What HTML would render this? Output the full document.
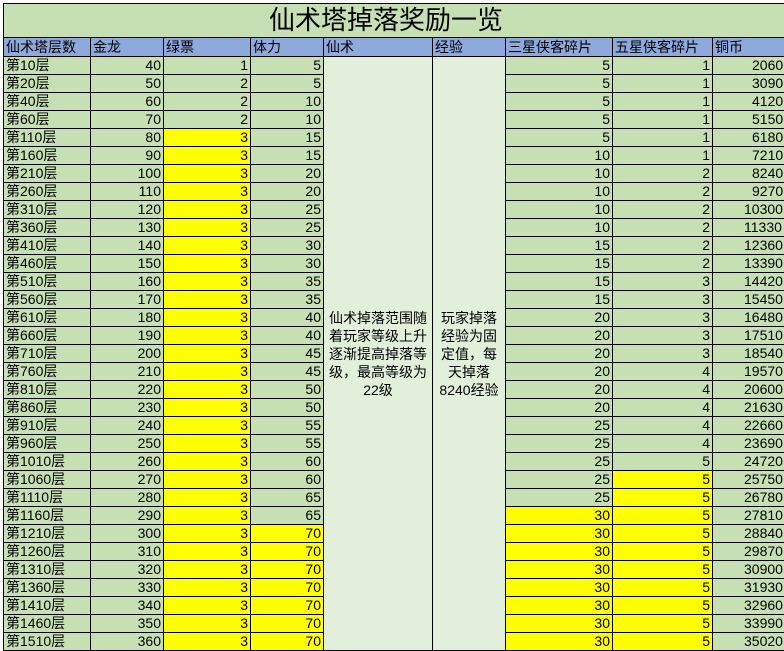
<!DOCTYPE html>
<html><head><meta charset="utf-8"><style>
html{overflow:hidden;}
body{margin:0;background:#fff;width:1000px;height:651px;overflow:hidden;position:relative;font-family:"Liberation Sans","Noto Sans CJK SC",sans-serif;}
table{position:absolute;left:3px;top:3px;border-collapse:collapse;table-layout:fixed;font-size:14px;width:800px;}
td{border:1px solid #000;padding:0 2px;height:17px;line-height:17px;background:#c6e0b4;text-align:right;white-space:nowrap;overflow:hidden;}
td:first-child{text-align:left;}
tr.h td{background:#8ea9db;text-align:left;height:18px;line-height:18px;}
tr.t td{height:33px;text-align:center;font-size:26px;background:#c6e0b4;}
td.y{background:#ffff00;}
td.m{background:#e2efda;text-align:center;white-space:normal;line-height:18px;vertical-align:middle;}
td.c4{text-align:left;padding-left:39px;}
td.c5{text-align:left;padding-left:31px;}
</style></head><body>
<table>
<colgroup><col style="width:87px"><col style="width:73px"><col style="width:87px"><col style="width:73px"><col style="width:109px"><col style="width:73px"><col style="width:107px"><col style="width:100px"><col style="width:91px"></colgroup>
<tr class="t"><td colspan="9" style="text-align:left;padding-left:265px">仙术塔掉落奖励一览</td></tr>
<tr class="h"><td>仙术塔层数</td><td>金龙</td><td>绿票</td><td>体力</td><td>仙术</td><td>经验</td><td>三星侠客碎片</td><td>五星侠客碎片</td><td>铜币</td></tr>
<tr><td>第10层</td><td>40</td><td>1</td><td>5</td><td class="m" rowspan="33">仙术掉落范围随着玩家等级上升逐渐提高掉落等级，最高等级为22级</td><td class="m" rowspan="33">玩家掉落经验为固定值，每天掉落8240经验</td><td>5</td><td>1</td><td class="c4">2060</td></tr>
<tr><td>第20层</td><td>50</td><td>2</td><td>5</td><td>5</td><td>1</td><td class="c4">3090</td></tr>
<tr><td>第40层</td><td>60</td><td>2</td><td>10</td><td>5</td><td>1</td><td class="c4">4120</td></tr>
<tr><td>第60层</td><td>70</td><td>2</td><td>10</td><td>5</td><td>1</td><td class="c4">5150</td></tr>
<tr><td>第110层</td><td>80</td><td class="y">3</td><td>15</td><td>5</td><td>1</td><td class="c4">6180</td></tr>
<tr><td>第160层</td><td>90</td><td class="y">3</td><td>15</td><td>10</td><td>1</td><td class="c4">7210</td></tr>
<tr><td>第210层</td><td>100</td><td class="y">3</td><td>20</td><td>10</td><td>2</td><td class="c4">8240</td></tr>
<tr><td>第260层</td><td>110</td><td class="y">3</td><td>20</td><td>10</td><td>2</td><td class="c4">9270</td></tr>
<tr><td>第310层</td><td>120</td><td class="y">3</td><td>25</td><td>10</td><td>2</td><td class="c5">10300</td></tr>
<tr><td>第360层</td><td>130</td><td class="y">3</td><td>25</td><td>10</td><td>2</td><td class="c5">11330</td></tr>
<tr><td>第410层</td><td>140</td><td class="y">3</td><td>30</td><td>15</td><td>2</td><td class="c5">12360</td></tr>
<tr><td>第460层</td><td>150</td><td class="y">3</td><td>30</td><td>15</td><td>2</td><td class="c5">13390</td></tr>
<tr><td>第510层</td><td>160</td><td class="y">3</td><td>35</td><td>15</td><td>3</td><td class="c5">14420</td></tr>
<tr><td>第560层</td><td>170</td><td class="y">3</td><td>35</td><td>15</td><td>3</td><td class="c5">15450</td></tr>
<tr><td>第610层</td><td>180</td><td class="y">3</td><td>40</td><td>20</td><td>3</td><td class="c5">16480</td></tr>
<tr><td>第660层</td><td>190</td><td class="y">3</td><td>40</td><td>20</td><td>3</td><td class="c5">17510</td></tr>
<tr><td>第710层</td><td>200</td><td class="y">3</td><td>45</td><td>20</td><td>3</td><td class="c5">18540</td></tr>
<tr><td>第760层</td><td>210</td><td class="y">3</td><td>45</td><td>20</td><td>4</td><td class="c5">19570</td></tr>
<tr><td>第810层</td><td>220</td><td class="y">3</td><td>50</td><td>20</td><td>4</td><td class="c5">20600</td></tr>
<tr><td>第860层</td><td>230</td><td class="y">3</td><td>50</td><td>20</td><td>4</td><td class="c5">21630</td></tr>
<tr><td>第910层</td><td>240</td><td class="y">3</td><td>55</td><td>25</td><td>4</td><td class="c5">22660</td></tr>
<tr><td>第960层</td><td>250</td><td class="y">3</td><td>55</td><td>25</td><td>4</td><td class="c5">23690</td></tr>
<tr><td>第1010层</td><td>260</td><td class="y">3</td><td>60</td><td>25</td><td>5</td><td class="c5">24720</td></tr>
<tr><td>第1060层</td><td>270</td><td class="y">3</td><td>60</td><td>25</td><td class="y">5</td><td class="c5">25750</td></tr>
<tr><td>第1110层</td><td>280</td><td class="y">3</td><td>65</td><td>25</td><td class="y">5</td><td class="c5">26780</td></tr>
<tr><td>第1160层</td><td>290</td><td class="y">3</td><td>65</td><td class="y">30</td><td class="y">5</td><td class="c5">27810</td></tr>
<tr><td>第1210层</td><td>300</td><td class="y">3</td><td class="y">70</td><td class="y">30</td><td class="y">5</td><td class="c5">28840</td></tr>
<tr><td>第1260层</td><td>310</td><td class="y">3</td><td class="y">70</td><td class="y">30</td><td class="y">5</td><td class="c5">29870</td></tr>
<tr><td>第1310层</td><td>320</td><td class="y">3</td><td class="y">70</td><td class="y">30</td><td class="y">5</td><td class="c5">30900</td></tr>
<tr><td>第1360层</td><td>330</td><td class="y">3</td><td class="y">70</td><td class="y">30</td><td class="y">5</td><td class="c5">31930</td></tr>
<tr><td>第1410层</td><td>340</td><td class="y">3</td><td class="y">70</td><td class="y">30</td><td class="y">5</td><td class="c5">32960</td></tr>
<tr><td>第1460层</td><td>350</td><td class="y">3</td><td class="y">70</td><td class="y">30</td><td class="y">5</td><td class="c5">33990</td></tr>
<tr><td>第1510层</td><td>360</td><td class="y">3</td><td class="y">70</td><td class="y">30</td><td class="y">5</td><td class="c5">35020</td></tr>
</table>
</body></html>
